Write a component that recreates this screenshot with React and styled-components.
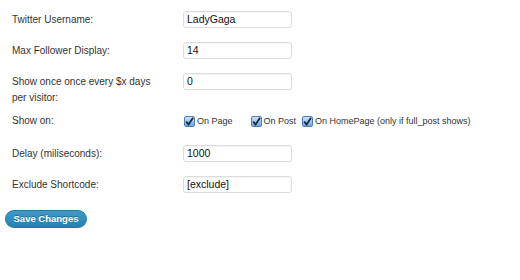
import React from 'react'
import styled, { createGlobalStyle } from 'styled-components';

const GlobalStyle = createGlobalStyle`
    body {
        margin: 0;
        background: #fff;
        font-family: "Liberation Sans", Arial, sans-serif;
        font-size: 10px;
        color: #333;
    }
`;

const Form = styled.div`
    padding: 11px 0 0 5px;
`;
const Table = styled.div`
    display: grid;
    grid-template-columns: 178px auto;
    row-gap: 14px;
    align-items: start;
`;
const Label = styled.div`
    padding-left: 7px;
    line-height: 16px;
    width: 145px;
    padding-top: 1px;
    margin-bottom: ${p => p.$mb || 0}px;
`;
const Input = styled.div`
    box-sizing: border-box;
    width: 109px;
    height: 17px;
    border: 1px solid #dcdcdc;
    border-radius: 3px;
    padding: 0 3px;
    line-height: 15px;
    font-size: 10.5px;
    color: #111;
    background: #fff;
    box-shadow: inset 0 1px 1px rgba(0,0,0,0.04);
`;
const Checks = styled.div`
    display: flex;
    align-items: center;
    height: 16px;
    padding-top: 1px;
`;
const Check = styled.label`
    display: flex;
    align-items: center;
    margin-right: ${p => p.$gap}px;
    font-size: 9px;
    color: #333;
`;
const Box = styled.span`
    display: inline-flex;
    align-items: center;
    justify-content: center;
    box-sizing: border-box;
    width: 11px;
    height: 11px;
    margin: 0 2px 0 1px;
    border: 1px solid #4a7fb8;
    border-radius: 2px;
    background: linear-gradient(#cfe3f8, #6fa6e0);
`;
const Button = styled.button`
    margin-top: 17px;
    width: 82px;
    height: 18px;
    border: 1px solid #2479a3;
    border-radius: 10px;
    background: linear-gradient(#3c9bcb, #2580b0);
    color: #fff;
    font-family: "Liberation Sans", Arial, sans-serif;
    font-weight: bold;
    font-size: 9.5px;
    line-height: 16px;
    padding: 0;
    text-shadow: 0 -1px 0 rgba(0,0,0,0.3);
`;

function CheckItem({ label, gap }) {
    return (
        <Check $gap={gap}>
            <Box>
                <svg width="9" height="9" viewBox="0 0 9 9">
                    <path d="M1.2 4.6 L3.6 7.4 L8 0.8" fill="none" stroke="#1b2a44" strokeWidth="1.8" />
                </svg>
            </Box>
            {label}
        </Check>
    )
}

function App() {
    return (
        <>
            <GlobalStyle />
            <Form>
                <Table>
                    <Label>Twitter Username:</Label>
                    <Input>LadyGaga</Input>
                    <Label>Max Follower Display:</Label>
                    <Input>14</Input>
                    <Label $mb={-8}>Show once once every $x days per visitor:</Label>
                    <Input>0</Input>
                    <Label $mb={2}>Show on:</Label>
                    <Checks>
                        <CheckItem label="On Page" gap={17} />
                        <CheckItem label="On Post" gap={5} />
                        <CheckItem label="On HomePage (only if full_post shows)" gap={0} />
                    </Checks>
                    <Label>Delay (miliseconds):</Label>
                    <Input>1000</Input>
                    <Label>Exclude Shortcode:</Label>
                    <Input>[exclude]</Input>
                </Table>
                <Button>Save Changes</Button>
            </Form>
        </>
    )
}

export default App
